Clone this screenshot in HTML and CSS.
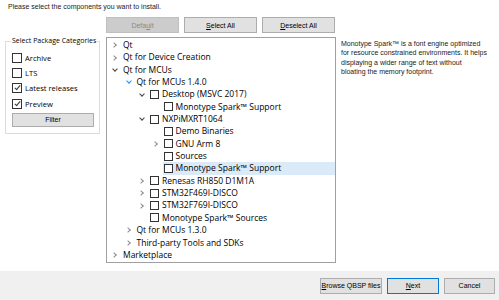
FILE: index.html
```html
<!DOCTYPE html>
<html lang="en">

<head>
    <meta charset="UTF-8">
    <meta name="viewport" content="width=device-width, initial-scale=1.0">
    <title>Select Components</title>
    <link rel="stylesheet" href="styles.css">
</head>

<body>
    <div class="page">
        <p class="intro">Please select the components you want to install.</p>

        <div class="toolbar">
            <button class="btn" disabled>Defa<u>u</u>lt</button>
            <button class="btn"><u>S</u>elect All</button>
            <button class="btn"><u>D</u>eselect All</button>
        </div>

        <div class="main">
            <fieldset class="categories">
                <legend>Select Package Categories</legend>
                <label class="cat"><span class="box"></span>Archive</label>
                <label class="cat"><span class="box"></span>LTS</label>
                <label class="cat"><span class="box checked"></span>Latest releases</label>
                <label class="cat"><span class="box checked"></span>Preview</label>
                <button class="btn filter">Filter</button>
            </fieldset>

            <div class="tree">
                <div class="row l0"><span class="arrow closed"></span><span class="item">Qt</span></div>
                <div class="row l0"><span class="arrow closed"></span><span class="item">Qt for Device Creation</span></div>
                <div class="row l0"><span class="arrow open"></span><span class="item">Qt for MCUs</span></div>
                <div class="row l1"><span class="arrow open hot"></span><span class="item">Qt for MCUs 1.4.0</span></div>
                <div class="row l2"><span class="arrow open"></span><span class="item"><span class="box"></span>Desktop (MSVC 2017)</span></div>
                <div class="row l3"><span class="arrow"></span><span class="item"><span class="box"></span>Monotype Spark™ Support</span></div>
                <div class="row l2"><span class="arrow open"></span><span class="item"><span class="box"></span>NXPiMXRT1064</span></div>
                <div class="row l3"><span class="arrow"></span><span class="item"><span class="box"></span>Demo Binaries</span></div>
                <div class="row l3"><span class="arrow closed"></span><span class="item"><span class="box"></span>GNU Arm 8</span></div>
                <div class="row l3"><span class="arrow"></span><span class="item"><span class="box"></span>Sources</span></div>
                <div class="row l3"><span class="arrow"></span><span class="item selected"><span class="box"></span>Monotype Spark™ Support</span></div>
                <div class="row l2"><span class="arrow closed"></span><span class="item"><span class="box"></span>Renesas RH850 D1M1A</span></div>
                <div class="row l2"><span class="arrow closed"></span><span class="item"><span class="box"></span>STM32F469I-DISCO</span></div>
                <div class="row l2"><span class="arrow closed"></span><span class="item"><span class="box"></span>STM32F769I-DISCO</span></div>
                <div class="row l2"><span class="arrow"></span><span class="item"><span class="box"></span>Monotype Spark™ Sources</span></div>
                <div class="row l1"><span class="arrow closed"></span><span class="item">Qt for MCUs 1.3.0</span></div>
                <div class="row l1"><span class="arrow closed"></span><span class="item">Third-party Tools and SDKs</span></div>
                <div class="row l0"><span class="arrow closed"></span><span class="item">Marketplace</span></div>
            </div>

            <p class="desc">Monotype Spark™ is a font engine optimized<br>
                for resource constrained environments. It helps<br>
                displaying a wider range of text without<br>
                bloating the memory footprint.</p>
        </div>

        <div class="footer">
            <button class="btn browse"><u>B</u>rowse QBSP files</button>
            <button class="btn next"><u>N</u>ext</button>
            <button class="btn cancel">Cancel</button>
        </div>
    </div>
</body>

</html>
```

FILE: styles.css
```css
body {
    margin: 0;
    background-color: #ffffff;
    font-family: 'Liberation Sans', Arial, sans-serif;
    font-size: 7px;
    color: #000000;
}

.page {
    display: flex;
    flex-direction: column;
    width: 499px;
    height: 300px;
}

.intro {
    margin: 0;
    padding-left: 8px;
    height: 14px;
    line-height: 14px;
    color: #1a1a1a;
}

.toolbar {
    display: flex;
    gap: 5px;
    padding: 3px 0 0 106px;
}

.btn {
    height: 16px;
    padding: 0;
    font-family: 'Liberation Sans', Arial, sans-serif;
    font-size: 7px;
    color: #000000;
    background-color: #e1e1e1;
    border: 1px solid #adadad;
    border-radius: 0;
}

.toolbar .btn {
    width: 73px;
}

.btn:disabled {
    background-color: #cccccc;
    border-color: #bfbfbf;
    color: #8a8a8a;
}

.main {
    display: flex;
    align-items: flex-start;
    margin-top: 4px;
}

/* left group box */
.categories {
    box-sizing: border-box;
    flex-shrink: 0;
    width: 95px;
    min-width: 0;
    margin: -1px 6px 0 5px;
    padding: 4px 5px 6px 6px;
    border: 1px solid #dcdcdc;
    display: flex;
    flex-direction: column;
}

.categories legend {
    padding: 0 1px;
    margin-left: -1px;
    line-height: 10px;
    white-space: nowrap;
    font-family: 'Open Sans', sans-serif;
    font-size: 7px;
}

.cat {
    display: flex;
    align-items: center;
    height: 15.4px;
    font-family: 'Open Sans', sans-serif;
    font-size: 7.6px;
}

.cat .box {
    width: 10px;
    height: 10px;
    margin-right: 3px;
}

.filter {
    margin-top: 1px;
    height: 14px;
    width: 100%;
}

.box {
    position: relative;
    box-sizing: border-box;
    display: inline-block;
    flex-shrink: 0;
    width: 9px;
    height: 9px;
    border: 1px solid #333333;
    background-color: #ffffff;
}

.box.checked::after {
    content: "";
    position: absolute;
    left: 2.5px;
    top: 0px;
    width: 2px;
    height: 5px;
    border-right: 1px solid #333333;
    border-bottom: 1px solid #333333;
    transform: rotate(40deg);
}

/* component tree */
.tree {
    box-sizing: border-box;
    flex-shrink: 0;
    width: 230px;
    height: 226px;
    padding-top: 1px;
    border: 1px solid #a0a0a0;
    font-family: 'Open Sans', sans-serif;
    font-size: 8.5px;
}

.row {
    display: flex;
    align-items: stretch;
    height: 12.35px;
    line-height: 12.35px;
    white-space: nowrap;
}

.l0 { padding-left: 5px; }
.l1 { padding-left: 18.5px; }
.l2 { padding-left: 32px; }
.l3 { padding-left: 45.5px; }

.arrow {
    display: flex;
    align-items: center;
    justify-content: center;
    width: 6px;
    margin-right: 4px;
    flex-shrink: 0;
}

.arrow::before {
    content: "";
    width: 3px;
    height: 3px;
    border-right: 1px solid #8c8c8c;
    border-bottom: 1px solid #8c8c8c;
}

.arrow.closed::before {
    transform: translateX(-1px) rotate(-45deg);
}

.arrow.open::before {
    border-color: #404040;
    transform: translateY(-1px) rotate(45deg);
}

.arrow.hot::before {
    border-color: #1e90e6;
}

.arrow:not(.open):not(.closed)::before {
    border: none;
}

.item {
    flex: 1;
    display: flex;
    align-items: center;
    padding-left: 1px;
}

.item .box {
    margin-right: 3px;
}

.item.selected {
    background-color: #dbeaf8;
}

.desc {
    margin: 2px 0 0 5px;
    line-height: 9.3px;
    white-space: nowrap;
    color: #1a1a1a;
}

.footer {
    margin-top: auto;
    height: 29px;
    display: flex;
    justify-content: flex-end;
    align-items: center;
    gap: 5px;
    padding-right: 4px;
    background-color: #f0f0f0;
}

.browse {
    width: 62px;
}

.next {
    width: 52px;
    border-color: #0078d7;
}

.cancel {
    width: 51px;
}
```
